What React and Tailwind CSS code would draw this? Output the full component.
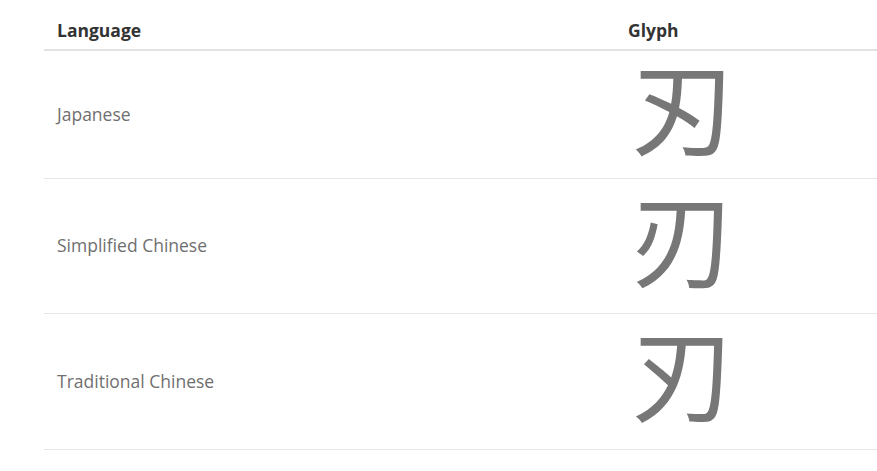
const rows = [
  { name: "Japanese", lang: "ja", font: "font-['Noto_Sans_CJK_JP',sans-serif]", h: "h-[128px]" },
  { name: "Simplified Chinese", lang: "zh-Hans", font: "font-['Noto_Sans_CJK_SC',sans-serif]", h: "h-[135px]" },
  { name: "Traditional Chinese", lang: "zh-Hant", font: "font-['Noto_Sans_CJK_TC',sans-serif]", h: "h-[136px]" },
];

function App() {
  return (
    <div className="min-h-screen bg-white pl-[44px] pt-[11px] font-['Open_Sans',sans-serif]">
      <table className="w-full border-collapse text-left">
        <thead>
          <tr className="h-[39px] border-b-2 border-[#e2e2e2]">
            <th className="w-[571px] pl-[13px] text-[17.5px] font-bold text-[#333333]">Language</th>
            <th className="pl-[13px] text-[17.5px] font-bold text-[#333333]">Glyph</th>
          </tr>
        </thead>
        <tbody>
          {rows.map((row) => (
            <tr key={row.lang} className={`${row.h} border-b border-[#e6e6e6]`}>
              <td className="pl-[13px] align-middle text-[17.5px] text-[#6f6f6f]">{row.name}</td>
              <td className="pl-[16px] align-middle">
                <span lang={row.lang} className={`${row.font} block pb-[22px] text-[104px] leading-none text-[#777777]`}>
                  刃
                </span>
              </td>
            </tr>
          ))}
        </tbody>
      </table>
    </div>
  );
}

export default App;
